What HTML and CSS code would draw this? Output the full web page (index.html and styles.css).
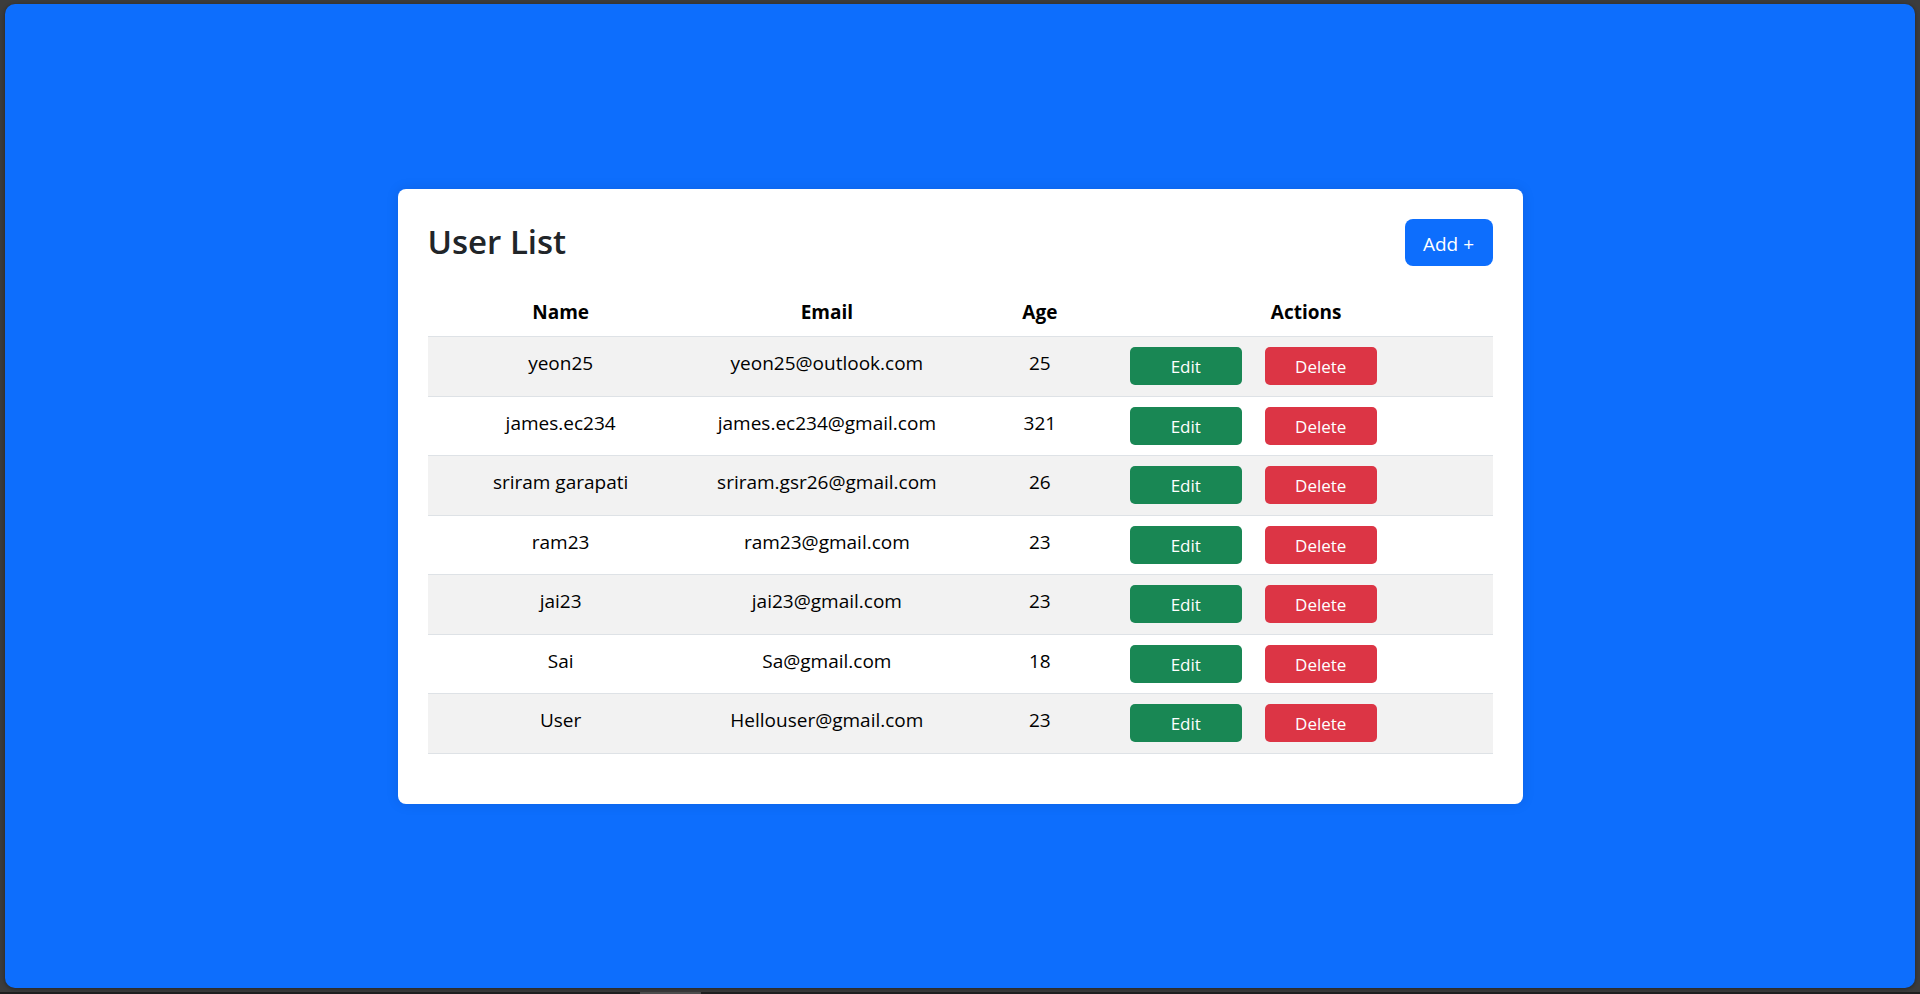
FILE: index.html
```html
<!DOCTYPE html>
<html lang="en">
<head>
<meta charset="utf-8">
<title>User List</title>
<link rel="stylesheet" href="styles.css">
</head>
<body>
<div class="window">
  <main class="page">
    <section class="card">
      <header class="card-header">
        <h1 class="title">User List</h1>
        <a class="btn btn-primary" href="#add">Add +</a>
      </header>
      <table class="users">
        <colgroup>
          <col class="col-name"><col class="col-email"><col class="col-age"><col class="col-actions">
        </colgroup>
        <thead>
          <tr><th scope="col">Name</th><th scope="col">Email</th><th scope="col">Age</th><th scope="col">Actions</th></tr>
        </thead>
        <tbody>
          <tr><td>yeon25</td><td>yeon25@outlook.com</td><td>25</td><td><div class="actions"><button type="button" class="btn-sm btn-success">Edit</button><button type="button" class="btn-sm btn-danger">Delete</button></div></td></tr>
          <tr><td>james.ec234</td><td>james.ec234@gmail.com</td><td>321</td><td><div class="actions"><button type="button" class="btn-sm btn-success">Edit</button><button type="button" class="btn-sm btn-danger">Delete</button></div></td></tr>
          <tr><td>sriram garapati</td><td>sriram.gsr26@gmail.com</td><td>26</td><td><div class="actions"><button type="button" class="btn-sm btn-success">Edit</button><button type="button" class="btn-sm btn-danger">Delete</button></div></td></tr>
          <tr><td>ram23</td><td>ram23@gmail.com</td><td>23</td><td><div class="actions"><button type="button" class="btn-sm btn-success">Edit</button><button type="button" class="btn-sm btn-danger">Delete</button></div></td></tr>
          <tr><td>jai23</td><td>jai23@gmail.com</td><td>23</td><td><div class="actions"><button type="button" class="btn-sm btn-success">Edit</button><button type="button" class="btn-sm btn-danger">Delete</button></div></td></tr>
          <tr><td>Sai</td><td>Sa@gmail.com</td><td>18</td><td><div class="actions"><button type="button" class="btn-sm btn-success">Edit</button><button type="button" class="btn-sm btn-danger">Delete</button></div></td></tr>
          <tr><td>User</td><td>Hellouser@gmail.com</td><td>23</td><td><div class="actions"><button type="button" class="btn-sm btn-success">Edit</button><button type="button" class="btn-sm btn-danger">Delete</button></div></td></tr>
        </tbody>
      </table>
    </section>
  </main>
  <div class="taskbar"><div class="taskbar-thumb"></div></div>
</div>
</body>
</html>
```
FILE: styles.css
```css
* { box-sizing: border-box; }

body {
  margin: 0;
  background: #3c3c3c;
  color: #212529;
  font-family: "Segoe UI", "Open Sans", "Noto Sans", sans-serif;
  font-size: 19px;
  line-height: 30px;
}

.window {
  display: flex;
  flex-direction: column;
  min-height: 100vh;
}

.page {
  flex: 1;
  display: flex;
  align-items: center;
  justify-content: center;
  margin: 4px 5px;
  border-radius: 10px;
  background: #0d6efd;
  box-shadow: 0 1px 4px rgba(0, 0, 0, 0.4);
}

.card {
  width: 100%;
  max-width: 1125px;
  padding: 30px;
  border-radius: 8px;
  background: #fff;
  box-shadow: 0 0 13px rgba(0, 0, 0, 0.1);
}

.card-header {
  display: flex;
  align-items: center;
  justify-content: space-between;
  margin-bottom: 20px;
}

.title {
  margin: 0;
  font-size: 33px;
  font-weight: 600;
  line-height: 42px;
}

.btn {
  min-width: 88px;
  padding: 10px 16px 7px;
  border-radius: 8px;
  text-align: center;
  text-decoration: none;
}

.btn-primary { background: #0d6efd; color: #fff; }

.users {
  width: 100%;
  margin-bottom: 20px;
  border-collapse: separate;
  border-spacing: 0;
  table-layout: fixed;
  color: #000;
  text-align: center;
}

.col-name, .col-email { width: 25%; }
.col-age { width: 15%; }
.col-actions { width: 35%; }

.users th,
.users td {
  padding: 11px 10px 9px;
  border-bottom: 1px solid #dee2e6;
  vertical-align: top;
}

.users th { font-weight: 700; }
.users td { height: 59px; }
.users td:last-child { padding: 10px; }
.users tbody tr:nth-child(odd) td { height: 60px; background: #f2f2f2; }

.actions {
  display: flex;
  gap: 23px;
  height: 38px;
}

.btn-sm {
  width: 112px;
  padding: 2px 0 0;
  border: 0;
  border-radius: 5px;
  color: #fff;
  font: inherit;
  font-size: 17px;
}

.btn-success { background: #198754; }
.btn-danger { background: #dc3545; }

.taskbar {
  height: 2px;
  background: #1f1f1f;
}

.taskbar-thumb {
  width: 61px;
  height: 100%;
  margin-left: 33.333%;
  background: #4d4d4d;
}
```
